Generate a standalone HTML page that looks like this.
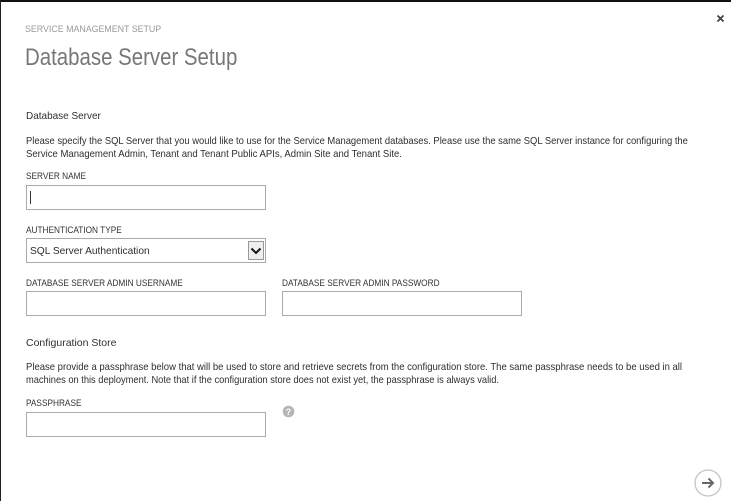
<!DOCTYPE html>
<html><head><meta charset="utf-8"><style>
html,body{margin:0;padding:0;background:#fff}
#p{position:relative;width:731px;height:501px;overflow:hidden;background:#fff;font-family:"Liberation Sans",sans-serif;color:#333}
.t{position:absolute;white-space:nowrap;line-height:14px;font-size:10.5px;color:#2e2e2e;transform-origin:0 50%}
.l{font-size:9.3px;color:#333;transform:scaleX(.89)}
.a{font-size:10.4px}
.b{position:absolute;box-sizing:border-box;width:240px;height:25px;border:1px solid #aaa;background:#fff}
</style></head><body><div id="p">
<div style="position:absolute;left:0;top:0;width:731px;height:2px;background:#111"></div>
<div style="position:absolute;left:0;top:0;width:1px;height:501px;background:#222"></div>
<div class="t" style="left:25px;top:23px;font-size:9.5px;color:#999;transform:scaleX(.93)">SERVICE MANAGEMENT SETUP</div>
<div class="t" style="left:25px;top:44px;font-size:24px;line-height:28px;color:#777;transform:scaleX(.851)">Database Server Setup</div>
<div class="t" style="left:26px;top:109px;font-size:10.5px;transform:scaleX(.95)">Database Server</div>
<div class="t a" style="left:26px;top:135px;transform:scaleX(.904)">Please specify the SQL Server that you would like to use for the Service Management databases. Please use the same SQL Server instance for configuring the</div>
<div class="t a" style="left:26px;top:148px;transform:scaleX(.918)">Service Management Admin, Tenant and Tenant Public APIs, Admin Site and Tenant Site.</div>
<div class="t l" style="left:26px;top:169px">SERVER NAME</div>
<div class="b" style="left:26px;top:185px"></div>
<div style="position:absolute;left:30px;top:191px;width:1px;height:13px;background:#333"></div>
<div class="t l" style="left:26px;top:223px">AUTHENTICATION TYPE</div>
<div class="b" style="left:26px;top:238px"></div>
<div class="t" style="left:30px;top:244px;font-size:10.5px;transform:scaleX(.97)">SQL Server Authentication</div>
<svg style="position:absolute;left:248px;top:241px" width="16" height="19"><rect x=".5" y=".5" width="15" height="18" fill="#eee" stroke="#999"/><path d="M3.500 7.500L8 12l4.500-4.500" fill="none" stroke="#111" stroke-width="2"/></svg>
<div class="t l" style="left:26px;top:276px">DATABASE SERVER ADMIN USERNAME</div>
<div class="b" style="left:26px;top:291px"></div>
<div class="t l" style="left:282px;top:276px">DATABASE SERVER ADMIN PASSWORD</div>
<div class="b" style="left:282px;top:291px"></div>
<div class="t" style="left:26px;top:336px;font-size:10.5px">Configuration Store</div>
<div class="t a" style="left:26px;top:361px;transform:scaleX(.914)">Please provide a passphrase below that will be used to store and retrieve secrets from the configuration store. The same passphrase needs to be used in all</div>
<div class="t a" style="left:26px;top:374px;transform:scaleX(.894)">machines on this deployment. Note that if the configuration store does not exist yet, the passphrase is always valid.</div>
<div class="t l" style="left:26px;top:396px">PASSPHRASE</div>
<div class="b" style="left:26px;top:412px"></div>
<svg style="position:absolute;left:282px;top:405px" width="13" height="13"><circle cx="6.500" cy="6.500" r="5.800" fill="#b5b5b5"/><text x="6.500" y="10" font-family="Liberation Sans" font-size="9" font-weight="bold" fill="#fff" text-anchor="middle">?</text></svg>
<svg style="position:absolute;left:694px;top:469px" width="28" height="28"><circle cx="14" cy="14" r="13" fill="#fff" stroke="#c4c4c4" stroke-width="1.300"/><path d="M8 14h11M14.500 9.500L19 14l-4.500 4.500" fill="none" stroke="#666" stroke-width="2"/></svg>
<svg style="position:absolute;left:716px;top:14px" width="9" height="9"><path d="M1.500 1.500l6 6M7.500 1.500l-6 6" stroke="#444" stroke-width="1.800"/></svg>
</div></body></html>
